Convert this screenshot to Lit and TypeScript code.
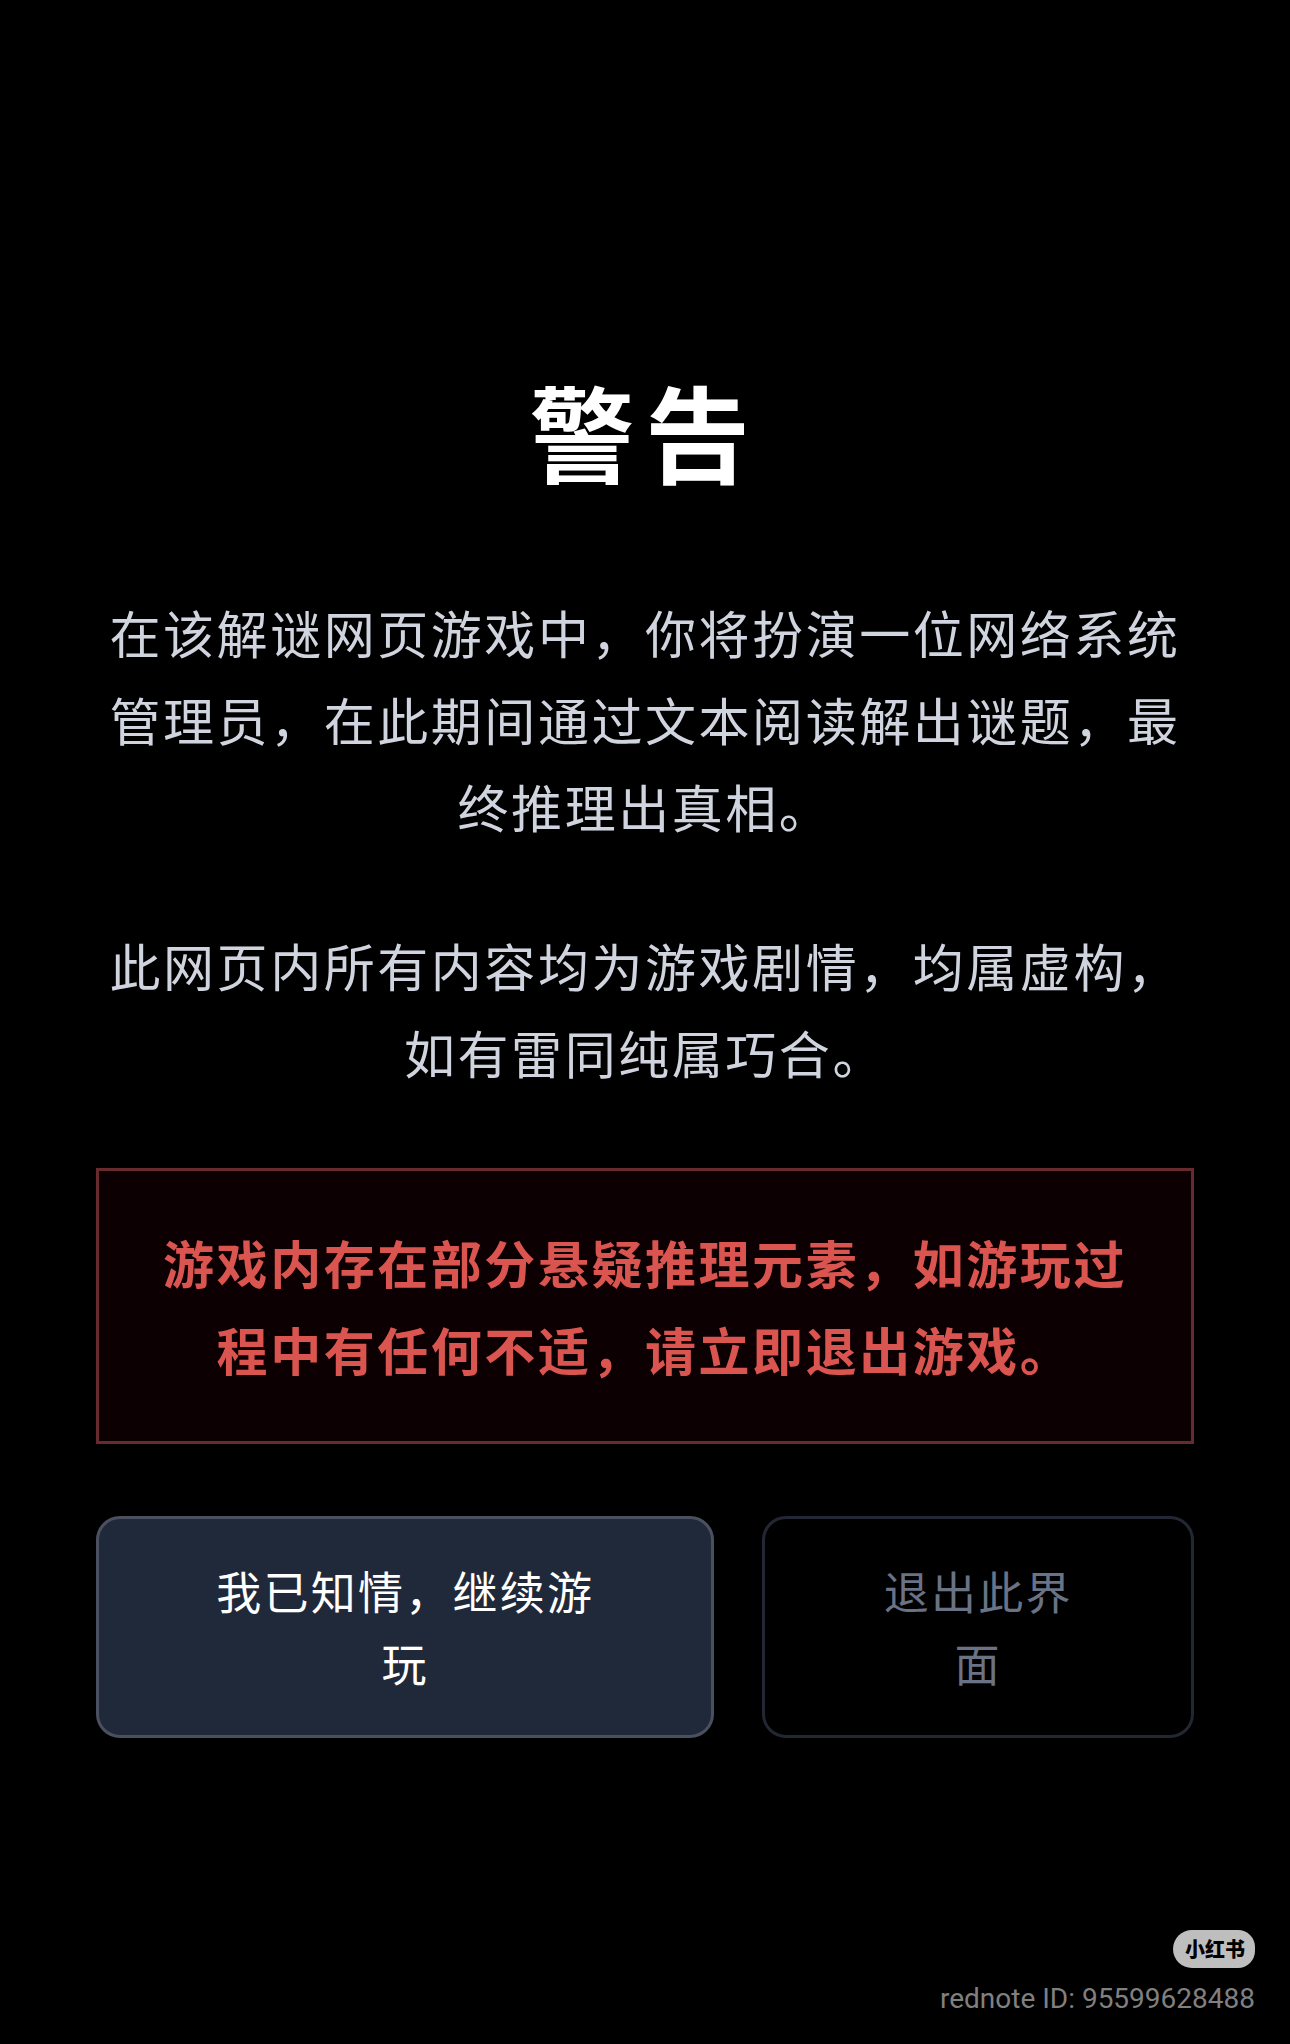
import { LitElement, html, css } from "lit";
import { customElement } from "lit/decorators.js";

@customElement("app-root")
export class AppRoot extends LitElement {
  static styles = css`
    :host {
      display: block;
      font-family: "Noto Sans CJK SC", sans-serif;
      background: #000;
      color: #d0d4de;
    }
    .page {
      box-sizing: border-box;
      min-height: 100vh;
      display: flex;
      flex-direction: column;
      padding: 375px 96px 24px;
    }
    .notice {
      display: flex;
      flex-direction: column;
      gap: 72px;
      text-align: center;
    }
    .title {
      margin: 0 0 34px;
      font-size: 105px;
      line-height: 108px;
      font-weight: 700;
      letter-spacing: 0.1em;
      color: #fff;
    }
    .text {
      margin: 0;
      font-size: 51px;
      line-height: 87px;
      letter-spacing: 0.05em;
    }
    .alert {
      padding: 48px;
      border: 3px solid #672b2d;
      background: #0c0002;
      color: #da5550;
      font-weight: 700;
    }
    .actions {
      display: flex;
      justify-content: center;
      gap: 48px;
    }
    .button {
      margin: 0;
      padding: 36px 96px;
      border: 3px solid #4b5060;
      border-radius: 24px;
      background: #202939;
      color: #fff;
      font-family: inherit;
      font-size: 45px;
      line-height: 72px;
      letter-spacing: 0.05em;
      cursor: pointer;
    }
    .exit {
      border-color: #232733;
      background: transparent;
      color: #6a7285;
    }
    .credit {
      display: flex;
      flex-direction: column;
      align-items: flex-end;
      gap: 10px;
      margin-top: auto;
      margin-right: -61px;
      font-family: Roboto, "Noto Sans CJK SC", sans-serif;
      font-size: 28px;
      line-height: 42px;
      color: #808080;
    }
    .brand {
      padding: 0 10px 0 12px;
      border-radius: 19px 17px 17px 19px;
      background: #bebebe;
      color: #000;
      font-family: "Noto Sans CJK SC", sans-serif;
      font-size: 20px;
      line-height: 38px;
      font-weight: 900;
    }
  `;

  render() {
    return html`
      <main class="page" lang="zh-CN">
        <section class="notice">
          <h1 class="title">警告</h1>
          <p class="text">
            在该解谜网页游戏中，你将扮演一位网络系统管理员，在此期间通过文本阅读解出谜题，最终推理出真相。
          </p>
          <p class="text">此网页内所有内容均为游戏剧情，均属虚构，如有雷同纯属巧合。</p>
          <p class="text alert">游戏内存在部分悬疑推理元素，如游玩过程中有任何不适，请立即退出游戏。</p>
          <div class="actions">
            <button class="button" type="button">我已知情，继续游玩</button>
            <button class="button exit" type="button">退出此界面</button>
          </div>
        </section>
        <footer class="credit">
          <span class="brand">小红书</span>
          <span>rednote ID: 95599628488</span>
        </footer>
      </main>
    `;
  }
}
